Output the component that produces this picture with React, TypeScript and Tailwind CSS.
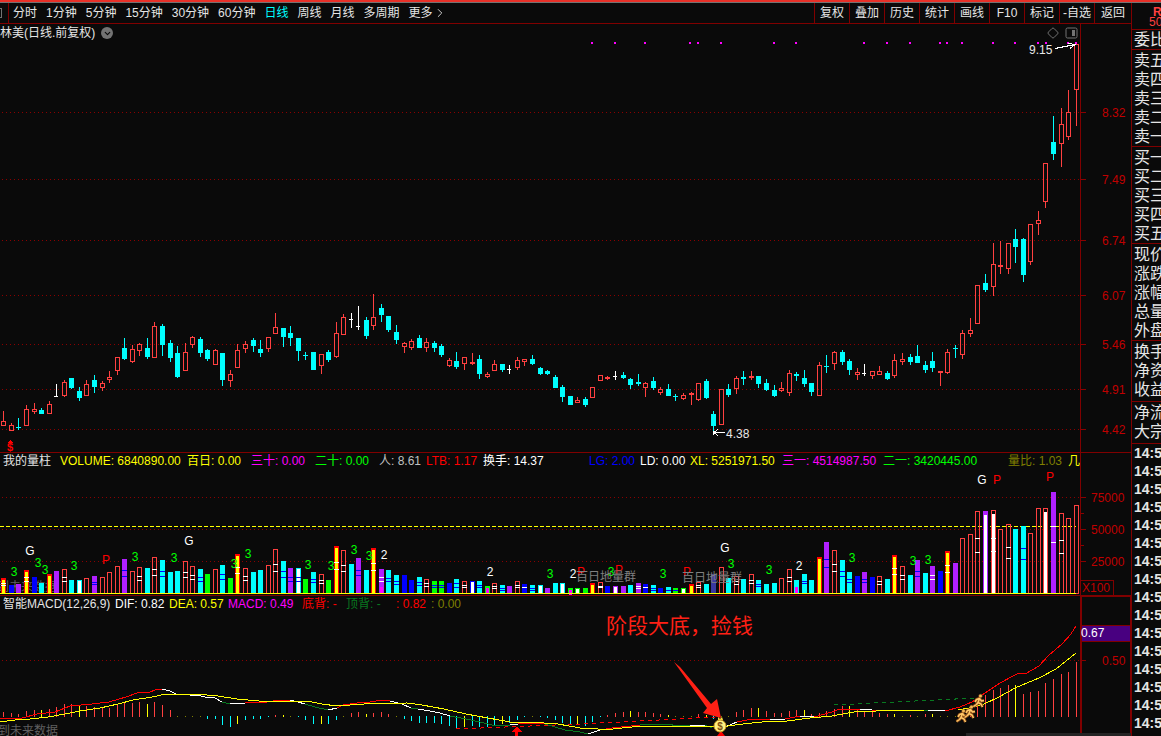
import { ChevronDown, ChevronRight, Diamond } from "lucide-react";

const periods = ["分时", "1分钟", "5分钟", "15分钟", "30分钟", "60分钟", "日线", "周线", "月线", "多周期"];
const tools = ["复权", "叠加", "历史", "统计", "画线", "F10", "标记", "-自选", "返回"];

const quoteGroups = [
  { pad: "pb-0", rows: ["委比"] },
  { pad: "pt-px", rows: ["卖五", "卖四", "卖三", "卖二", "卖一"] },
  { pad: "pt-px", rows: ["买一", "买二", "买三", "买四", "买五"] },
  { pad: "pt-px", rows: ["现价", "涨跌", "涨幅", "总量", "外盘"] },
  { pad: "pt-px pb-0.5", rows: ["换手", "净资", "收益"] },
  { pad: "pt-px pb-0.5", rows: ["净流", "大宗"] },
];
const ticks = Array.from({ length: 16 }, () => "14:5");

const volumeStats = [
  { text: "我的量柱", color: "text-neutral-200" },
  { text: "VOLUME: 6840890.00", color: "text-[#ffff00]" },
  { text: "百日: 0.00", color: "text-[#ffff00]" },
  { text: "三十: 0.00", color: "text-[#ff00ff]" },
  { text: "二十: 0.00", color: "text-[#00ff00]" },
  { text: "人: 8.61", color: "text-[#c0c0c0]" },
  { text: "LTB: 1.17", color: "text-[#ff0000]" },
  { text: "换手: 14.37", color: "text-white" },
  { text: "LG: 2.00", color: "text-[#0000ff]" },
  { text: "LD: 0.00", color: "text-white" },
  { text: "XL: 5251971.50", color: "text-[#ffff00]" },
  { text: "三一: 4514987.50", color: "text-[#ff00ff]" },
  { text: "二一: 3420445.00", color: "text-[#00ff00]" },
  { text: "量比: 1.03", color: "text-[#808000]" },
  { text: "几", color: "text-[#ffff00]" },
];

const macdStats = [
  { text: "智能MACD(12,26,9)", color: "text-neutral-200" },
  { text: "DIF: 0.82", color: "text-white" },
  { text: "DEA: 0.57", color: "text-[#ffff00]" },
  { text: "MACD: 0.49", color: "text-[#ff00ff]" },
  { text: "底背: -", color: "text-[#ff0000]" },
  { text: "顶背: -", color: "text-[#087820]" },
  { text: ": 0.82", color: "text-[#ff0000]" },
  { text: ": 0.00", color: "text-[#808000]" },
];

// kind, high, body top, body bottom, low
type Candle = [string, number, number, number, number];
const candles: Candle[] = [
  ["r", 411, 421, 426, 426], ["r", 423, 425, 431, 431], ["c", 418, 427, 428, 430], ["r", 405, 409, 426, 426],
  ["r", 403, 409, 412, 414], ["c", 408, 410, 414, 414], ["r", 401, 404, 414, 414], ["w", 384, 396, 397, 397],
  ["r", 380, 382, 396, 397], ["c", 378, 378, 388, 389], ["c", 387, 391, 398, 401], ["r", 380, 384, 396, 396],
  ["c", 375, 380, 387, 393], ["r", 381, 383, 388, 391], ["r", 371, 377, 380, 383], ["r", 357, 357, 371, 375],
  ["c", 338, 348, 359, 360], ["r", 345, 349, 362, 363], ["r", 343, 344, 351, 356], ["c", 338, 348, 357, 359],
  ["r", 322, 326, 358, 358], ["c", 324, 326, 345, 356], ["c", 340, 343, 358, 362], ["c", 346, 353, 377, 378],
  ["r", 343, 352, 371, 371], ["r", 336, 337, 345, 348], ["c", 337, 339, 353, 357], ["c", 349, 350, 359, 361],
  ["r", 349, 350, 365, 365], ["c", 353, 353, 380, 386], ["r", 370, 374, 381, 387], ["r", 344, 350, 368, 368],
  ["r", 341, 344, 349, 353], ["c", 338, 340, 346, 352], ["c", 340, 349, 353, 357], ["r", 337, 337, 349, 352],
  ["r", 313, 327, 334, 334], ["c", 328, 328, 337, 347], ["c", 326, 333, 338, 346], ["c", 338, 338, 351, 361],
  ["c", 352, 355, 356, 360], ["c", 352, 352, 370, 370], ["r", 354, 354, 366, 374], ["c", 350, 352, 360, 362],
  ["r", 322, 333, 357, 358], ["r", 314, 317, 335, 335], ["w", 313, 319, 320, 328], ["w", 306, 326, 327, 330],
  ["c", 317, 320, 336, 339], ["r", 294, 317, 326, 330], ["c", 304, 308, 315, 322], ["c", 316, 316, 330, 332],
  ["c", 325, 332, 340, 344], ["r", 342, 343, 347, 353], ["r", 339, 341, 348, 350], ["c", 335, 338, 348, 348],
  ["r", 338, 342, 348, 352], ["c", 341, 343, 348, 352], ["c", 344, 346, 355, 357], ["r", 358, 360, 366, 367],
  ["c", 352, 361, 367, 369], ["r", 357, 357, 364, 370], ["r", 353, 362, 364, 365], ["c", 355, 359, 374, 379],
  ["r", 372, 374, 377, 378], ["r", 360, 364, 371, 371], ["c", 364, 364, 370, 372], ["w", 365, 369, 370, 374],
  ["r", 357, 360, 368, 370], ["r", 359, 359, 362, 366], ["c", 355, 359, 364, 365], ["c", 367, 368, 374, 375],
  ["c", 370, 371, 374, 375], ["c", 375, 377, 388, 388], ["c", 385, 387, 397, 402], ["c", 396, 396, 405, 405],
  ["r", 397, 400, 403, 403], ["c", 397, 399, 405, 407], ["r", 387, 387, 398, 398], ["r", 375, 375, 381, 381],
  ["r", 376, 377, 379, 380], ["w", 371, 376, 377, 380], ["c", 372, 375, 378, 379], ["c", 378, 379, 385, 389],
  ["c", 374, 382, 384, 386], ["r", 382, 383, 388, 397], ["c", 377, 381, 388, 390], ["r", 387, 389, 393, 395],
  ["c", 384, 389, 396, 396], ["c", 394, 396, 397, 401], ["r", 393, 395, 399, 400], ["r", 392, 393, 395, 405],
  ["r", 383, 383, 400, 401], ["c", 379, 381, 398, 399], ["c", 411, 414, 426, 432], ["r", 389, 389, 425, 425],
  ["c", 384, 389, 395, 397], ["r", 376, 378, 389, 394], ["c", 371, 377, 379, 385], ["r", 371, 376, 378, 380],
  ["c", 376, 376, 384, 388], ["c", 379, 383, 390, 391], ["c", 385, 390, 396, 397], ["r", 382, 388, 391, 392],
  ["r", 370, 373, 393, 396], ["c", 372, 374, 376, 381], ["c", 370, 378, 384, 387], ["c", 383, 383, 392, 396],
  ["r", 362, 365, 396, 396], ["c", 355, 366, 367, 373], ["r", 351, 352, 364, 370], ["c", 350, 352, 362, 365],
  ["c", 359, 361, 370, 375], ["r", 368, 372, 375, 380], ["w", 364, 373, 374, 376], ["r", 371, 371, 376, 379],
  ["r", 366, 371, 375, 375], ["c", 371, 373, 379, 380], ["r", 354, 360, 376, 378], ["r", 353, 359, 362, 365],
  ["c", 354, 357, 362, 365], ["c", 345, 356, 363, 363], ["c", 361, 365, 370, 373], ["c", 352, 361, 368, 372],
  ["r", 371, 371, 373, 386], ["r", 349, 352, 373, 374], ["c", 345, 348, 349, 358], ["r", 330, 333, 355, 359],
  ["r", 318, 330, 334, 337], ["r", 285, 285, 324, 324], ["c", 274, 283, 290, 292], ["r", 243, 264, 287, 296],
  ["r", 241, 265, 267, 274], ["r", 243, 243, 269, 274], ["c", 229, 239, 247, 263], ["c", 238, 239, 275, 282],
  ["r", 224, 224, 262, 265], ["r", 211, 220, 224, 235], ["r", 163, 163, 202, 208], ["c", 116, 142, 154, 160],
  ["r", 108, 124, 144, 167], ["r", 90, 112, 137, 140], ["r", 44, 44, 90, 126],
];

// kind, top, then the marks across the bar
type Volume = [string, number, ...number[]];
const volumes: Volume[] = [
  ["y", 578, 583, 585], ["b", 585], ["m", 584], ["y", 570, 577, 581], ["b", 577], ["c", 583], ["y", 574], ["m", 571],
  ["o", 569, 577, 581], ["c", 580], ["cw", 580], ["o", 578], ["m", 576, 582, 584], ["o", 577], ["o", 572], ["o", 566],
  ["m", 559, 570, 576], ["o", 571], ["o", 567, 576, 580], ["c", 568], ["o", 557, 569, 575], ["c", 560, 571, 576],
  ["c", 572], ["c", 571], ["o", 561, 572, 577], ["o", 566, 575, 579], ["c", 569, 577, 581], ["g", 574], ["o", 569],
  ["c", 565, 574, 579], ["g", 578], ["y", 554, 567, 573], ["o", 568, 576, 580], ["c", 572], ["c", 570], ["o", 565],
  ["o", 549, 564, 571], ["c", 561, 571, 577], ["m", 568, 577, 581], ["cw", 568, 577, 581], ["g", 579],
  ["c", 572, 579, 582], ["o", 574, 580, 583], ["g", 580], ["y", 546, 562, 569], ["o", 550, 565, 571], ["c", 564],
  ["m", 558, 570, 575], ["c", 570], ["y", 548, 563, 570], ["mp", 569, 577, 581], ["c", 570, 578, 581],
  ["c", 575, 581, 584], ["b", 575], ["b", 580], ["c", 577, 582, 585], ["o", 579, 583, 586], ["g", 581, 585, 587],
  ["g", 581, 585, 587], ["b", 583], ["c", 579, 583, 587], ["o", 581, 585, 587], ["bw", 581], ["c", 581, 585, 587],
  ["gp", 586], ["o", 583, 586, 588], ["c", 585, 588, 590], ["m", 586], ["o", 581, 585, 587], ["b", 584, 587],
  ["c", 585, 588, 590], ["cw", 585], ["m", 588], ["c", 583], ["cw", 583], ["gp", 588], ["gw", 588], ["g", 588],
  ["y", 583], ["o", 582, 586, 587], ["b", 586], ["mw", 586], ["m", 586], ["c", 585], ["v", 583, 586, 588],
  ["b", 584, 587], ["c", 585, 588, 590], ["b", 588], ["c", 587, 590], ["g", 588, 590], ["gw", 588], ["y", 584],
  ["o", 582, 585, 587], ["c", 584], ["n", 574], ["o", 567], ["c", 578], ["o", 576, 581, 584], ["c", 579],
  ["o", 574, 580, 583], ["c", 580, 584, 586], ["c", 584], ["c", 583], ["o", 578], ["o", 569, 577, 581], ["cp", 580],
  ["c", 574, 581, 583], ["c", 580], ["y", 557], ["m", 542, 559, 567], ["o", 550, 564, 571], ["c", 560, 571, 576],
  ["c", 572, 579, 582], ["b", 576], ["m", 572, 579, 582], ["b", 577], ["o", 576, 581, 584], ["c", 579],
  ["y", 555, 568, 574], ["o", 566, 575, 579], ["c", 575], ["m", 560, 571, 576], ["c", 573], ["v", 566, 575, 579],
  ["b", 571], ["y", 551, 565, 572], ["m", 563], ["o", 538], ["o", 534], ["o", 511, 538, 552], ["mw", 511],
  ["ow", 510, 538, 551], ["o", 529], ["o", 524, 547, 558], ["c", 529], ["c", 526, 548, 559], ["o", 533], ["o", 508],
  ["ow", 508], ["v", 492, 526, 542], ["o", 513, 540, 553], ["o", 518], ["o", 505],
];

const histogram = [
  5, 4, 3, 6, 7, 7, 8, 10, 13, 13, 11, 11, 10, 9, 9, 12, 14, 14, 15, 13, 15, 12, 7, 0, 0, 0, 0, -3, -3, -9, -11, -8,
  -4, -3, -3, -1, 2, 2, 0, -1, -4, -8, -8, -8, -4, 0, 4, 5, 3, 4, 5, 3, 0, -3, -5, -7, -7, -7, -8, -10, -12, -11, -10,
  -11, -11, -10, -8, -7, -4, -1, 0, -1, -2, -4, -7, -9, -9, -10, -6, -1, 2, 4, 5, 6, 5, 5, 4, 3, 2, 0, 0, 0, 3, 2, -3,
  0, 0, 5, 7, 9, 9, 6, 4, 4, 6, 7, 7, 3, 4, 6, 8, 11, 11, 7, 6, 5, 4, 3, 3, 0, 2, 0, 3, 3, 0, 0, 0, 0, 3, 19, 22, 27,
  29, 32, 32, 23, 25, 26, 34, 38, 43, 45, 55,
];
const turns = new Set([5, 10, 19, 31, 37, 42, 48, 61, 66, 76, 83, 88, 93, 100, 106, 112, 118, 123, 134]);

const RED = "#ff4040";
const GRID = "#8b0000";
const fills: Record<string, string> = {
  r: RED, c: "#00ffff", w: "#ffffff", b: "#0000ff", m: "#b020ff", v: "#b020ff", g: "#00ff00", n: "#3838a0", p: "#ff00ff",
};

const priceScale = [
  [112, "8.32"], [179, "7.49"], [240, "6.74"], [295, "6.07"], [344, "5.46"], [389, "4.91"], [429, "4.42"],
] as const;
const volumeScale = [[497, "75000"], [529, "50000"], [561, "25000"]] as const;

const eventDots = [591, 614, 644, 689, 697, 720, 773, 795, 863, 886, 909, 939, 946, 961, 992, 1014, 1037, 1045, 1067, 1075];

const signals: [string, number, number][] = [
  ["G", 30, 550], ["3", 14, 571], ["3", 38, 562], ["3", 45, 569], ["3", 74, 565], ["P", 106, 559], ["3", 135, 556],
  ["3", 174, 557], ["G", 189, 540], ["3", 234, 563], ["3", 248, 553], ["3", 308, 564], ["3", 331, 565],
  ["3", 354, 549], ["3", 369, 555], ["2", 384, 554], ["2", 490, 571], ["3", 550, 573], ["2", 573, 573],
  ["P", 581, 571], ["3", 611, 571], ["P", 619, 569], ["3", 663, 573], ["P", 687, 571], ["G", 725, 547],
  ["3", 731, 563], ["3", 769, 569], ["2", 799, 565], ["3", 852, 557], ["3", 913, 560], ["3", 928, 559],
  ["G", 982, 479], ["P", 997, 479], ["P", 1050, 476],
];
const signalColors: Record<string, string> = { G: "#ffffff", "2": "#ffffff", "3": "#00ff00", P: "#ff0000" };

const dif = [
  ["#ff0000", "0,718 22,718 37,714 55,712 70,706 92,704 109,702 126,697 137,693 150,692 155,690 162,689"],
  ["#ffffff", "162,689 170,691 176,694 190,695 197,695 205,697 215,698 222,702"],
  ["#087820", "222,702 230,704"],
  ["#ffffff", "230,704 245,703"],
  ["#ff0000", "245,703 255,702 262,703 273,701 290,700"],
  ["#ffffff", "290,700 298,702 305,704"],
  ["#087820", "305,704 315,707 328,710"],
  ["#ffffff", "328,710 337,708"],
  ["#ff0000", "337,708 343,705 357,703 370,702 382,700 390,701"],
  ["#ffffff", "390,701 402,704 411,708"],
  ["#087820", "411,708 418,709"],
  ["#ffffff", "418,709 430,711 440,713 450,716"],
  ["#087820", "450,716 466,719 480,722 492,725 510,725"],
  ["#ffffff", "510,725 518,724"],
  ["#ff0000", "518,724 535,723 545,724"],
  ["#087820", "545,724 555,727 565,730 580,732 588,734"],
  ["#ffffff", "588,734 600,730"],
  ["#ff0000", "600,730 612,728 640,725"],
  ["#087820", "640,725 670,724 675,726 690,725"],
  ["#ffffff", "690,725 705,725"],
  ["#087820", "705,725 712,728"],
  ["#ffffff", "725,727 737,722"],
  ["#ff0000", "737,722 752,719 770,719"],
  ["#ffffff", "770,719 785,719"],
  ["#ff0000", "785,719 800,716"],
  ["#ffffff", "800,716 814,717"],
  ["#ff0000", "814,717 832,712 840,709 860,709"],
  ["#ffffff", "860,709 872,710"],
  ["#ff0000", "872,710 898,710"],
  ["#087820", "898,710 928,710"],
  ["#ffffff", "928,710 945,711"],
  ["#ff0000", "945,711 960,707 972,702 985,693 1000,683 1015,675 1019,673 1025,674 1039,666 1048,656 1062,644 1071,634 1076,626"],
];
const dea =
  "0,722 15,720 30,719 48,717 65,714 80,711 100,708 118,704 133,700 152,697 166,694 196,694 218,696 237,699 259,701 307,701 322,704 337,706 364,704 407,703 422,705 444,709 466,714 488,718 510,722 544,723 558,724 580,728 598,729 613,729 632,727 654,726 728,726 743,724 762,722 787,721 810,718 832,716 854,712 876,711 925,710 958,710 969,708 984,704 999,697 1015,688 1039,678 1056,669 1076,653";

const barX = (i: number) => Math.floor(3.89 + i * 7.551);

const GridLine = ({ y }: { y: number }) => (
  <>
    <line x1="2" x2="1080" y1={y + 0.5} y2={y + 0.5} stroke={GRID} strokeDasharray="1 3" />
    <rect x="1080" y={y} width="6" height="1" fill={GRID} />
  </>
);

const CandleBar = ({ data, x }: { data: Candle; x: number }) => {
  const [kind, high, top, bottom, low] = data;
  const hollow = kind === "r" && bottom - top > 2;
  return (
    <g fill={fills[kind]}>
      <rect x={x} y={high} width="1" height={top - high} />
      <rect x={x} y={bottom} width="1" height={low - bottom} />
      {hollow ? (
        <rect x={x - 1.5} y={top + 0.5} width="4" height={bottom - top - 1} fill="none" stroke={RED} />
      ) : (
        <rect x={x - 2} y={top} width={kind === "w" ? 4 : 5} height={bottom - top} />
      )}
    </g>
  );
};

const VolumeBar = ({ data, x }: { data: Volume; x: number }) => {
  const [kind, top, ...marks] = data;
  const base = kind[0];
  const core = kind[1];
  const height = 593 - top;
  const whiteMarks = "oyvb".includes(base) || core === "p";
  return (
    <g>
      {base === "o" && <rect x={x - 1.5} y={top + 0.5} width="4" height={height} fill="none" stroke={RED} />}
      {base === "y" && (
        <>
          <rect x={x - 2} y={top} width="5" height={height} fill="#ff0000" />
          <rect x={x - 1} y={top + 2} width="3" height={height - 2} fill="#ffff00" />
        </>
      )}
      {base !== "o" && base !== "y" && <rect x={x - 2} y={top} width="5" height={height} fill={fills[base]} />}
      {core === "w" && (
        <rect x={x - 1} y={top + (height > 40 ? 4 : 1)} width="3" height={height - (height > 40 ? 4 : 1)} fill="#ffffff" />
      )}
      {marks.map((y) => (
        <rect key={y} x={x - 2} y={y} width="5" height="1" fill={whiteMarks ? "#ffffff" : "#0000ff"} />
      ))}
      {core === "p" && <rect x={x - 1} y={Math.max(top + 2, 587)} width="3" height="6" fill="#ff00ff" />}
    </g>
  );
};

const Runner = ({ x, y }: { x: number; y: number }) => (
  <g transform={`translate(${x} ${y})`} fill="none" strokeLinejoin="round" shapeRendering="auto">
    <path d="M6.500 4.500 5 8.500 3.500 10.500 0.500 12.500M5 8.500l3 1.500 1.500 3M2 8l1.500-2.500 3-1 2 2.500 2.500-.5" stroke="#8a4a14" strokeWidth="3" />
    <circle cx="7.500" cy="2" r="1.800" fill="#f5b955" stroke="#8a4a14" strokeWidth="0.500" />
    <path d="M6.500 4.500 5 8.500 3.500 10.500 0.500 12.500M5 8.500l3 1.500 1.500 3M2 8l1.500-2.500 3-1 2 2.500 2.500-.5" stroke="#ffc868" strokeWidth="1.500" />
  </g>
);

const Toolbar = () => (
  <nav className="flex h-[21px] items-stretch border-b border-[#800000]">
    <div className="w-[9px] border-r border-[#800000]">
      <div className="my-[5px] h-[10px] w-[2px] border-y border-r border-neutral-500" />
    </div>
    <div className="flex flex-1 items-center gap-[9px] overflow-hidden pl-1">
      {periods.map((p) => (
        <button key={p} className={`shrink-0 ${p === "日线" ? "text-[#00ffff]" : ""}`}>
          {p}
        </button>
      ))}
      <button className="flex shrink-0 items-center">
        更多
        <ChevronRight size={14} strokeWidth={1.5} />
      </button>
    </div>
    {tools.map((t) => (
      <button key={t} className="w-[35px] shrink-0 border-l border-[#800000] last:w-[37px]">
        {t}
      </button>
    ))}
  </nav>
);

const PricePanel = () => (
  <section className="border-b border-[#800000]">
    <div className="flex h-[18px]">
      <div className="flex flex-1 items-center">
        <h1>林美(日线.前复权)</h1>
        <button aria-label="展开" className="ml-1.5 flex size-3 items-center justify-center rounded-full bg-neutral-500 text-[#0a0a0a]">
          <ChevronDown size={9} strokeWidth={3} />
        </button>
        <div className="ml-auto flex items-center gap-1.5 pr-0.5 text-neutral-500">
          <Diamond size={12} strokeWidth={2} />
          <svg width="13" height="12" viewBox="0 0 13 12" fill="none" stroke="currentColor">
            <rect x="1" y="1" width="11" height="10" rx="1.500" />
            <rect x="7" y="3" width="3" height="6" fill="currentColor" stroke="none" />
          </svg>
        </div>
      </div>
      <div className="w-[51px] border-l border-[#800000]" />
    </div>
    <svg viewBox="0 42 1131 410" className="block h-auto w-full" shapeRendering="crispEdges" fontSize="12">
      {priceScale.map(([y, label]) => (
        <g key={label}>
          <GridLine y={y} />
          <text x="1102" y={y + 5} fill="#c00000">{label}</text>
        </g>
      ))}
      <rect x="1080" y="42" width="1" height="410" fill="#800000" />
      {candles.map((c, i) => (
        <CandleBar key={i} data={c} x={barX(i)} />
      ))}
      {eventDots.map((x) => (
        <rect key={x} x={x} y="42" width="2" height="2" fill="#ff00ff" />
      ))}
      <g stroke="#ffffff" fill="none">
        <path d="M1055 48.5 1075 44.5M1068 43.5 1075 44.5 1070 48.5" />
        <path d="M714 432.5H725M714 432.5l4-3M714 432.5l4 3M713.5 431v4" />
      </g>
      <text x="1029" y="54" fill="#e8e8e8">9.15</text>
      <text x="726" y="438" fill="#e8e8e8">4.38</text>
      <path d="M10 440l3 3H7z" fill="#ff0000" />
      <text x="10" y="451" textAnchor="middle" fontSize="11" fontWeight="bold" fill="#ff0000">$</text>
    </svg>
  </section>
);

const VolumePanel = () => (
  <section className="border-b border-[#800000]">
    <div className="flex h-4">
      <div className="grid min-w-0 flex-1 grid-cols-[57px_127px_64px_64px_64px_47px_57px_106px_51px_50px_92px_101px_125px_60px_12px] items-center overflow-hidden pl-[3px]">
        {volumeStats.map(({ text, color }) => (
          <span key={text} className={color}>{text}</span>
        ))}
      </div>
      <div className="w-[51px] shrink-0 border-l border-[#800000]" />
    </div>
    <svg viewBox="0 469 1131 126" className="block h-auto w-full" shapeRendering="crispEdges" fontSize="12">
      {volumeScale.map(([y, label]) => (
        <g key={label}>
          <GridLine y={y} />
          <text x="1091" y={y + 5} fill="#c00000">{label}</text>
        </g>
      ))}
      <rect x="1080" y="469" width="1" height="126" fill="#800000" />
      <path d="M1081 513.5h3M1081 545.5h3" stroke={GRID} />
      <text x="-3" y="591" fill="#606060">到未来数据</text>
      <line x1="0" x2="1076" y1="526.5" y2="526.5" stroke="#ffff00" strokeDasharray="4 2" />
      {volumes.map((v, i) => (
        <VolumeBar key={i} data={v} x={barX(i)} />
      ))}
      {signals.map(([label, x, y]) => (
        <text key={`${label}${x}`} x={x} y={y + 5} textAnchor="middle" fill={signalColors[label]}>{label}</text>
      ))}
      <text x="576" y="581" fill="#808080">百日地量群</text>
      <text x="682" y="582" fill="#808080">百日地量群</text>
      <rect x="0" y="593" width="1076" height="1" fill="#ffff00" />
      <rect x="1080.5" y="580.5" width="33" height="15" fill="none" stroke="#800000" />
      <text x="1082" y="592" fill="#c00000">X100</text>
    </svg>
  </section>
);

const MacdPanel = () => (
  <section>
    <div className="flex h-4">
      <div className="grid min-w-0 flex-1 grid-cols-[112px_54px_59px_74px_44px_50px_35px_40px] items-center overflow-hidden pl-[3px]">
        {macdStats.map(({ text, color }) => (
          <span key={text} className={color}>{text}</span>
        ))}
      </div>
      <div className="w-[51px] shrink-0 border-t border-r border-l-2 border-[#800000]" />
    </div>
    <svg viewBox="0 612 1131 124" className="block h-auto w-full" shapeRendering="crispEdges" fontSize="12">
      <GridLine y={660} />
      <text x="1102" y="665" fill="#c00000">0.50</text>
      <rect x="1080" y="612" width="2" height="124" fill="#800000" />
      <rect x="1130" y="612" width="1" height="124" fill="#800000" />
      <rect x="1082" y="626" width="48" height="15" fill="#480080" />
      <path d="M1080 625.5h51M1080 641.5h51" stroke="#800000" />
      <text x="1081" y="637" fill="#ffffff">0.67</text>
      <text x="-2" y="735" fill="#606060">到未来数据</text>
      {histogram.map((h, i) => {
        const color = h === 0 ? "#808000" : turns.has(i) ? "#ffff00" : h > 0 ? RED : "#00ffff";
        return <rect key={i} x={barX(i)} y={h > 0 ? 717 - h : 716} width="1" height={Math.max(Math.abs(h), 1)} fill={color} />;
      })}
      <g fill="none">
        <polyline points="456,729 580,724 640,721 715,717" stroke="#ff0000" strokeDasharray="4 4" />
        <polyline points="834,705 976,698" stroke="#087820" strokeDasharray="4 4" />
        {dif.map(([color, points]) => (
          <polyline key={points} points={points} stroke={color} />
        ))}
        <polyline points={dea} stroke="#ffff00" />
      </g>
      <path d="M517 726l5 6h-4v4h-3v-4h-4z" fill="#ff0000" />
      <Runner x={956} y={709} />
      <Runner x={964} y={705} />
      <Runner x={973} y={694} />
      <g shapeRendering="auto">
        <path d="M674 662l6 5 31 37 6-5 4 19-18-5 4-5z" fill="#ff2015" />
        <path d="M721 731l4 5h-8z" fill="#ff0000" />
        <path d="M718 717l2 2 2-2 1 3h-5z" fill="#ffe040" />
        <circle cx="720" cy="726" r="6" fill="#fff080" stroke="#c89820" />
        <text x="720" y="730" textAnchor="middle" fontSize="10" fontWeight="bold" fill="#805010">$</text>
      </g>
      <text x="606" y="633" fontSize="21" fill="#ff2015">阶段大底，捡钱</text>
      <rect x="966" y="733" width="165" height="3" fill="#242424" />
    </svg>
  </section>
);

const QuoteAside = () => (
  <aside className="w-[30px] shrink-0 overflow-hidden border-l border-[#800000] whitespace-nowrap">
    <div className="flex h-[27px] flex-col items-end border-b border-[#800000] pt-1 leading-[10px] text-[#ff4040]">
      <b className="w-2">R</b>
      <span className="w-3">500</span>
    </div>
    {quoteGroups.map(({ pad, rows }) => (
      <ul key={rows[0]} className={`border-b border-[#800000] pl-0.5 text-base leading-[19px] ${pad}`}>
        {rows.map((label) => (
          <li key={label} className="h-[19px]">{label}</li>
        ))}
      </ul>
    ))}
    <ul className="pl-0.5 text-sm leading-[18px] font-bold">
      {ticks.map((t, i) => (
        <li key={i} className="h-[18px]">{t}</li>
      ))}
    </ul>
  </aside>
);

const App = () => (
  <div className="min-h-screen overflow-hidden bg-[#0a0a0a] font-['Liberation_Sans','Noto_Sans_CJK_SC',sans-serif] text-xs leading-4 whitespace-nowrap text-neutral-200">
    <div className="h-[3px] border-b border-neutral-500 bg-[#e83028]" />
    <div className="flex">
      <main className="min-w-0 flex-1">
        <Toolbar />
        <PricePanel />
        <VolumePanel />
        <MacdPanel />
      </main>
      <QuoteAside />
    </div>
  </div>
);

export default App;
